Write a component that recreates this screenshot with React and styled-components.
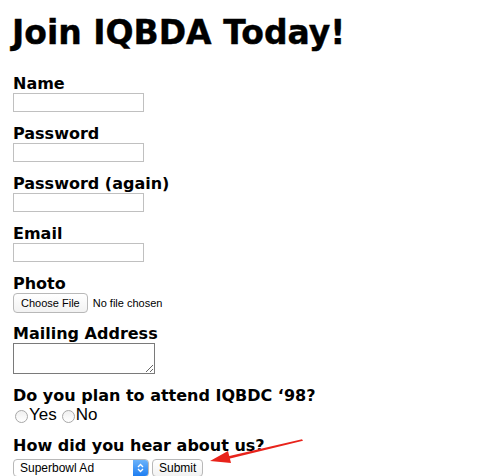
import React from 'react';
import styled, { createGlobalStyle } from 'styled-components';

const GlobalStyle = createGlobalStyle`
  html, body {
    margin: 0;
    padding: 0;
    background: #fff;
  }
`;

const Page = styled.div`
  position: relative;
  width: 486px;
  height: 476px;
  overflow: hidden;
  padding: 0 13px;
  box-sizing: border-box;
  font-family: 'DejaVu Sans', Verdana, sans-serif;
  color: #000;
`;

const Title = styled.h1`
  margin: 0 0 0 -1px;
  padding-top: 12px;
  font-size: 33px;
  font-weight: bold;
  line-height: 41px;
  -webkit-text-stroke: 0.4px #000;
`;

const Form = styled.form`
  display: flex;
  flex-direction: column;
  gap: 12px;
  margin-top: 21px;
`;

const Field = styled.div`
  display: flex;
  flex-direction: column;
  align-items: flex-start;
`;

const Label = styled.label`
  font-size: 16px;
  font-weight: bold;
  line-height: 19px;
`;

const TextInput = styled.input`
  box-sizing: border-box;
  width: 131px;
  height: 19px;
  margin: 0;
  padding: 1px 2px;
  border: 1px solid #c0c0c0;
  background: #fff;
  outline: none;
`;

const FileRow = styled.div`
  display: flex;
  align-items: center;
  gap: 5px;
  font-family: 'Liberation Sans', Arial, sans-serif;
  font-size: 11px;
  height: 19px;
`;

const MacButton = styled.button`
  box-sizing: border-box;
  height: ${p => p.$h || 19}px;
  padding: 0 ${p => p.$px || 9}px;
  border: 1px solid #b8b8b8;
  border-radius: 4px;
  background: linear-gradient(#ffffff, #f2f2f2);
  font-family: 'Liberation Sans', Arial, sans-serif;
  font-size: ${p => p.$fs || 11}px;
  color: #000;
`;

const Textarea = styled.textarea`
  box-sizing: border-box;
  width: 142px;
  height: 31px;
  margin: 0;
  border: 1px solid #7a7a7a;
  resize: both;
`;

const RadioRow = styled.div`
  display: flex;
  align-items: center;
  font-family: 'Liberation Sans', Arial, sans-serif;
  font-size: 17px;
  line-height: 19px;
`;

const Radio = styled.span`
  display: inline-block;
  box-sizing: border-box;
  width: 13px;
  height: 13px;
  margin: 3px 1px 0 2px;
  border: 1px solid #a8a8a8;
  border-radius: 50%;
  background: linear-gradient(#f0f0f0, #ffffff);
`;

const RadioText = styled.span`
  margin-right: 3px;
`;

const SubmitRow = styled.div`
  display: flex;
  align-items: center;
  gap: 3px;
  margin-top: 4px;
`;

const Select = styled.div`
  box-sizing: border-box;
  display: flex;
  align-items: center;
  justify-content: space-between;
  width: 136px;
  height: 18px;
  padding-left: 6px;
  border: 1px solid #b8b8b8;
  border-radius: 4px;
  background: #fff;
  font-family: 'Liberation Sans', Arial, sans-serif;
  font-size: 12px;
  overflow: hidden;
`;

const SelectArrows = styled.span`
  display: flex;
  align-items: center;
  justify-content: center;
  width: 15px;
  height: 100%;
  background: linear-gradient(#6cb3fa, #1e7ef2);
`;

const Arrow = styled.svg`
  position: absolute;
  left: 200px;
  top: 430px;
  pointer-events: none;
`;

export default function App() {
  return (
    <Page>
      <GlobalStyle />
      <Title>Join IQBDA Today!</Title>
      <Form>
        <Field>
          <Label>Name</Label>
          <TextInput type="text" />
        </Field>
        <Field>
          <Label>Password</Label>
          <TextInput type="password" />
        </Field>
        <Field>
          <Label>Password (again)</Label>
          <TextInput type="password" />
        </Field>
        <Field>
          <Label>Email</Label>
          <TextInput type="text" />
        </Field>
        <Field>
          <Label>Photo</Label>
          <FileRow>
            <MacButton type="button" $h={20} $px={7}>Choose File</MacButton>
            <span>No file chosen</span>
          </FileRow>
        </Field>
        <Field>
          <Label>Mailing Address</Label>
          <Textarea />
        </Field>
        <Field>
          <Label>Do you plan to attend IQBDC ‘98?</Label>
          <RadioRow>
            <Radio /><RadioText>Yes</RadioText>
            <Radio /><RadioText>No</RadioText>
          </RadioRow>
        </Field>
        <Field>
          <Label>How did you hear about us?</Label>
          <SubmitRow>
            <Select>
              <span>Superbowl Ad</span>
              <SelectArrows>
                <svg width="7" height="10" viewBox="0 0 7 10">
                  <path d="M1 4 L3.5 1.5 L6 4 M1 6 L3.5 8.5 L6 6" fill="none" stroke="#fff" strokeWidth="1.3" />
                </svg>
              </SelectArrows>
            </Select>
            <MacButton type="button" $h={18} $px={6} $fs={12}>Submit</MacButton>
          </SubmitRow>
        </Field>
      </Form>
      <Arrow width="110" height="40" viewBox="0 0 110 40">
        <path d="M102 9.2 L103 10.8 L26 29.5 L25 27 Z" fill="#e8231b" />
        <polygon points="10,31 28,21 31,33" fill="#e8231b" />
      </Arrow>
    </Page>
  );
}
